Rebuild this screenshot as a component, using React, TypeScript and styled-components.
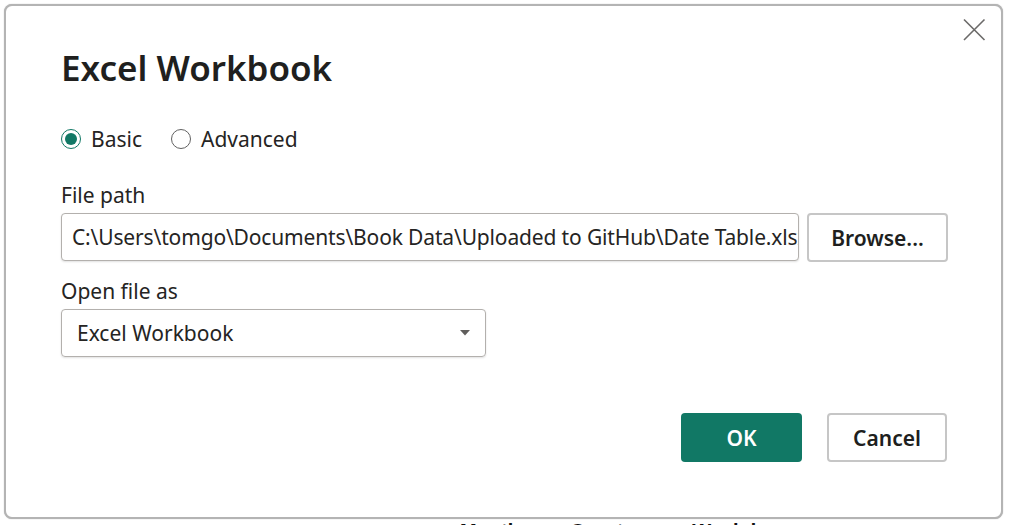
import styled, { createGlobalStyle } from "styled-components";

const GlobalStyle = createGlobalStyle`
	html, body {
		margin: 0;
		padding: 0;
		background: #ffffff;
	}
	* {
		box-sizing: border-box;
	}
`;

const Page = styled.div`
	width: 1009px;
	height: 525px;
	overflow: hidden;
	padding: 4px 0 0 4px;
	font-family: "Noto Sans", "Open Sans", sans-serif;
	color: #252423;
`;

const Dialog = styled.div`
	width: 999px;
	height: 515px;
	border: 2px solid #b4b4b4;
	border-radius: 8px;
	box-shadow: 0 0 1px rgba(0, 0, 0, 0.35);
	background: #ffffff;
	padding: 12px 15px 0 55px;
	display: flex;
	flex-direction: column;
`;

const Header = styled.div`
	display: flex;
	justify-content: space-between;
	align-items: flex-start;
`;

const Title = styled.h1`
	margin: 28px 0 0;
	font-size: 35px;
	line-height: 44px;
	font-weight: 600;
	color: #201f1e;
`;

const CloseButton = styled.button`
	width: 24px;
	height: 24px;
	padding: 0;
	border: none;
	background: none;
	display: flex;
`;

const RadioRow = styled.div`
	display: flex;
	align-items: center;
	gap: 29px;
	margin-top: 35px;
	height: 28px;
`;

const RadioOption = styled.label`
	display: flex;
	align-items: center;
	gap: 10px;
	font-size: 21px;
	line-height: 28px;
`;

const RadioCircle = styled.span<{ checked?: boolean }>`
	width: 20px;
	height: 20px;
	border-radius: 50%;
	border: 1.5px solid ${(props) => (props.checked ? "#117865" : "#616161")};
	display: flex;
	align-items: center;
	justify-content: center;

	&::after {
		content: "";
		width: 12px;
		height: 12px;
		border-radius: 50%;
		background: ${(props) => (props.checked ? "#117865" : "transparent")};
	}
`;

const FieldLabel = styled.div<{ top: number }>`
	margin-top: ${(props) => props.top}px;
	font-size: 21px;
	line-height: 28px;
`;

const InputRow = styled.div`
	display: flex;
	gap: 8px;
	margin-top: 4px;
`;

const TextInput = styled.input`
	width: 738px;
	height: 48px;
	border: 1px solid #b3b0ad;
	border-radius: 4px;
	box-shadow: 0 1px 2px rgba(0, 0, 0, 0.12);
	padding: 0 0 0 10px;
	font-family: inherit;
	font-size: 21px;
	letter-spacing: -0.15px;
	color: #252423;
	outline: none;
`;

const Button = styled.button<{ primary?: boolean; width: number }>`
	width: ${(props) => props.width}px;
	height: 49px;
	border-radius: 4px;
	border: ${(props) => (props.primary ? "none" : "2px solid #c6c6c6")};
	background: ${(props) => (props.primary ? "#117865" : "#ffffff")};
	color: ${(props) => (props.primary ? "#ffffff" : "#201f1e")};
	font-family: inherit;
	font-size: 21px;
	font-weight: 600;
	padding: 0;
`;

const Select = styled.div`
	width: 425px;
	height: 48px;
	margin-top: 4px;
	border: 1px solid #b3b0ad;
	border-radius: 4px;
	box-shadow: 0 1px 2px rgba(0, 0, 0, 0.12);
	padding: 0 15px 0 15px;
	display: flex;
	align-items: center;
	justify-content: space-between;
	font-size: 21px;
`;

const Footer = styled.div`
	display: flex;
	justify-content: flex-end;
	gap: 25px;
	margin-top: 56px;
	padding-right: 39px;
`;

const BehindText = styled.div`
	display: flex;
	gap: 50px;
	padding: 2px 0 0 456px;
	font-family: "Liberation Sans", Arial, sans-serif;
	font-weight: 700;
	font-size: 20px;
	line-height: 20px;
	color: #111111;
`;

const App = () => {
	return (
		<Page>
			<GlobalStyle />
			<Dialog>
				<Header>
					<Title>Excel Workbook</Title>
					<CloseButton aria-label="Close">
						<svg width="24" height="24" viewBox="0 0 24 24">
							<path d="M2 1.5 L22.5 22 M22.5 1.5 L2 22" stroke="#6b6a69" strokeWidth="1.6" fill="none" />
						</svg>
					</CloseButton>
				</Header>
				<RadioRow>
					<RadioOption>
						<RadioCircle checked />
						Basic
					</RadioOption>
					<RadioOption>
						<RadioCircle />
						Advanced
					</RadioOption>
				</RadioRow>
				<FieldLabel top={28}>File path</FieldLabel>
				<InputRow>
					<TextInput readOnly value={"C:\\Users\\tomgo\\Documents\\Book Data\\Uploaded to GitHub\\Date Table.xlsx"} />
					<Button width={141}>Browse...</Button>
				</InputRow>
				<FieldLabel top={15}>Open file as</FieldLabel>
				<Select>
					<span>Excel Workbook</span>
					<svg width="10" height="6" viewBox="0 0 10 6">
						<path d="M0 0 L10 0 L5 5.5 Z" fill="#605e5c" />
					</svg>
				</Select>
				<Footer>
					<Button primary width={121}>OK</Button>
					<Button width={120}>Cancel</Button>
				</Footer>
			</Dialog>
			<BehindText>
				<span>Month</span>
				<span>Quarter</span>
				<span>Weekday</span>
			</BehindText>
		</Page>
	);
};

export default App;
